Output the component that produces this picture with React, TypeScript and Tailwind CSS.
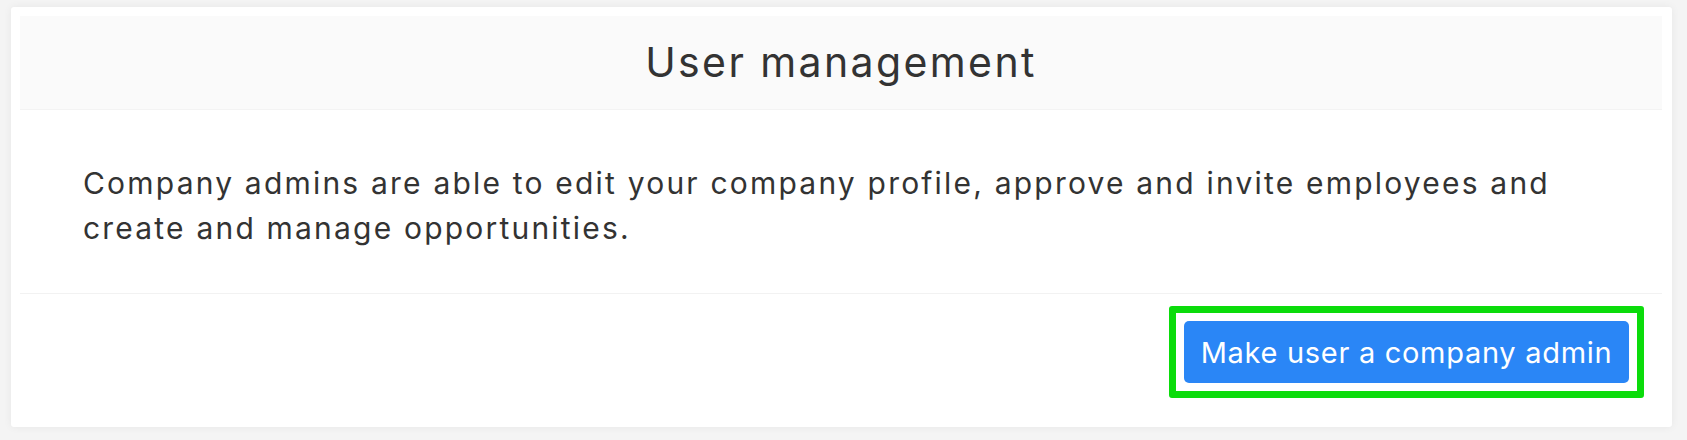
import React from "react";

export default function App() {
  return (
    <div
      className="w-[1687px] h-[440px] bg-[#f4f4f4] pt-[7px] pl-[11px] overflow-hidden"
      style={{ fontFamily: "Inter, 'Noto Sans', sans-serif" }}
    >
      <div className="w-[1661px] h-[420px] bg-white rounded-[3px] shadow-[0_0_8px_rgba(0,0,0,0.06)] p-[9px] pr-[10px] flex flex-col">
        <div className="h-[94px] bg-[#fafafa] border-b border-[#f3f3f3] flex items-center justify-center">
          <h1 className="text-[41px] leading-none text-[#333333] font-normal tracking-[2.4px]">User management</h1>
        </div>
        <div className="pl-[63px] pr-[20px] pt-[51px] pb-[42px] border-b border-[#f2f2f2]">
          <p className="text-[30px] leading-[45px] text-[#333333] tracking-[2.2px] whitespace-nowrap">
            Company admins are able to edit your company profile, approve and invite employees and
            <br />
            create and manage opportunities.
          </p>
        </div>
        <div className="flex justify-end pt-[12px] pr-[18px]">
          <div className="border-[7px] border-[#0bdc0b] rounded-[3px] p-[8px]">
            <button className="h-[62px] w-[445px] rounded-[5px] bg-[#2a86f6] text-white text-[29px] leading-none tracking-[0.7px] flex items-center justify-center">
              Make user a company admin
            </button>
          </div>
        </div>
      </div>
    </div>
  );
}
